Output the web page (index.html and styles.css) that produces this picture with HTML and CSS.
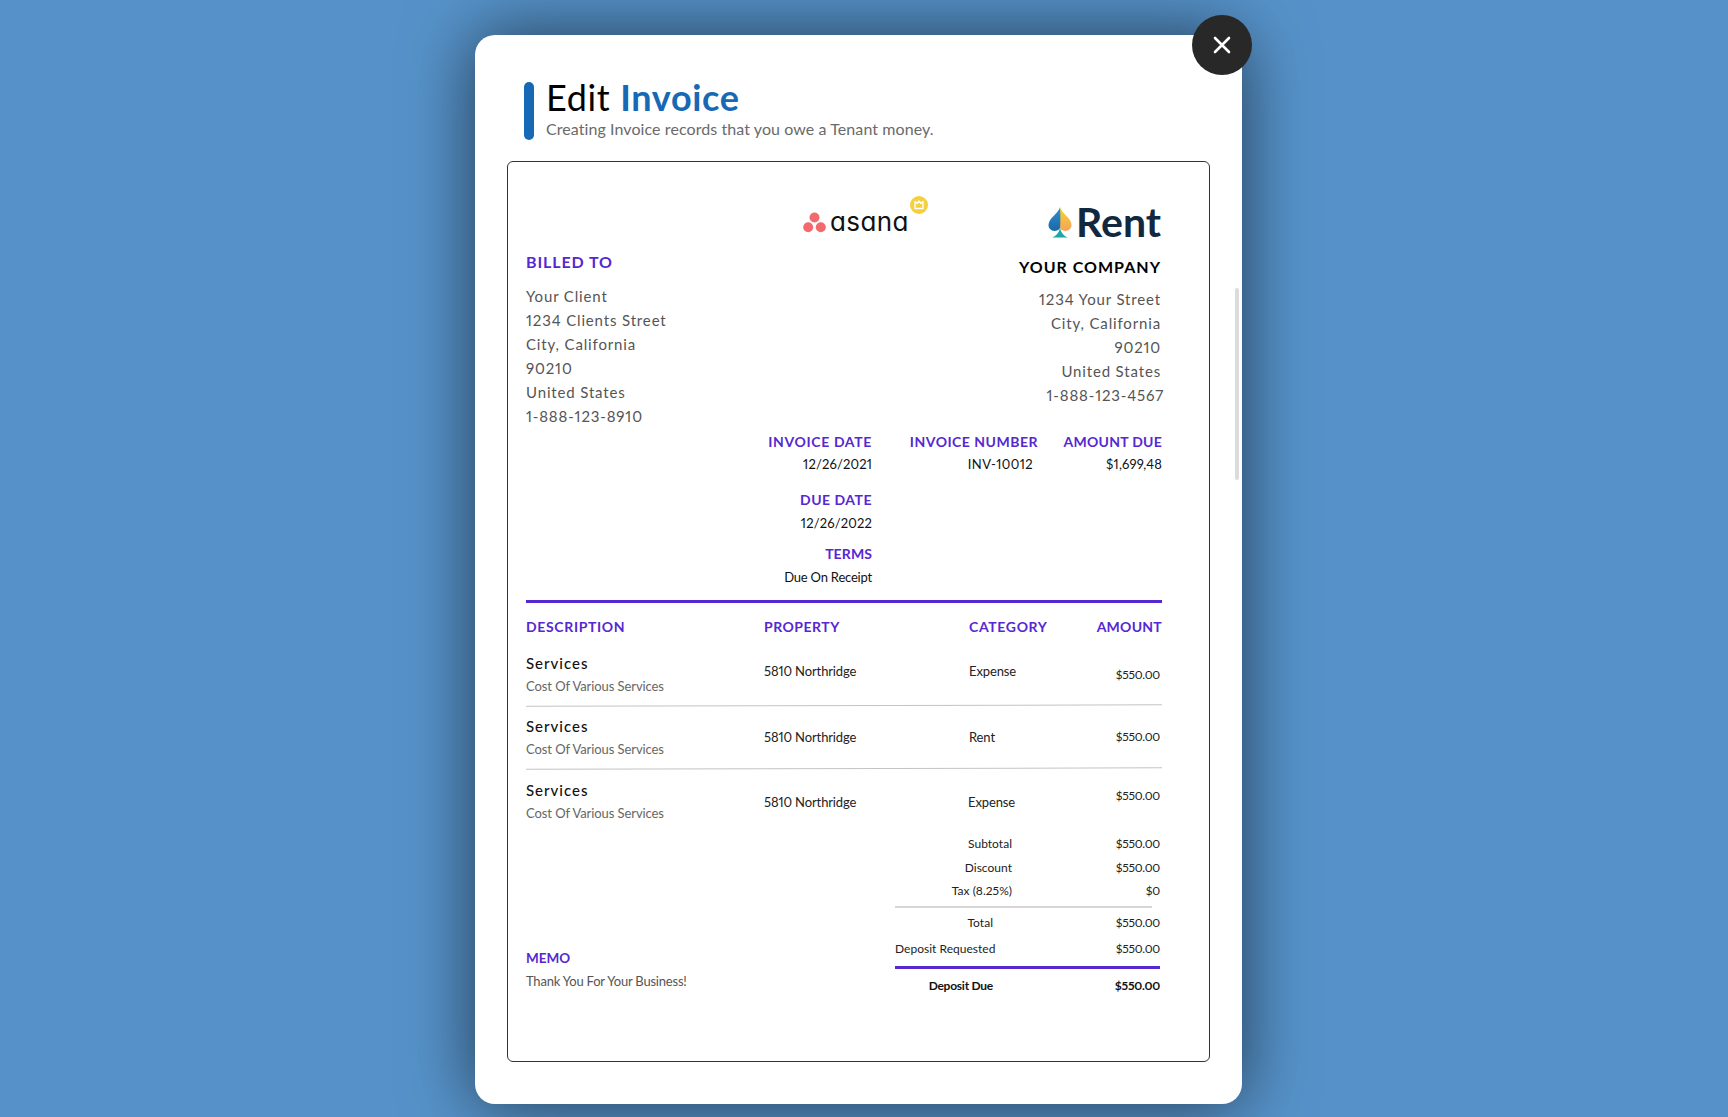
FILE: index.html
```html
<!DOCTYPE html>
<html lang="en">
<head>
<meta charset="utf-8">
<title>Edit Invoice</title>
<link rel="stylesheet" href="styles.css">
</head>
<body>
<div class="modal">
  <button class="close" aria-label="Close">
    <svg width="18" height="18" viewBox="0 0 18 18"><path d="M2 2 16 16M16 2 2 16" stroke="#fff" stroke-width="2.6" stroke-linecap="round" fill="none"/></svg>
  </button>
  <div class="scrollbar"></div>
  <header class="head">
    <span class="head-bar"></span>
    <div>
      <h1 class="title">Edit <b>Invoice</b></h1>
      <p class="subtitle">Creating Invoice records that you owe a Tenant money.</p>
    </div>
  </header>
  <section class="card">
    <div class="logos">
      <div class="asana">
        <svg class="asana-dots" width="23" height="21" viewBox="0 0 23 21"><circle cx="11.500" cy="5.500" r="5" fill="#f4696d"/><circle cx="5.200" cy="15.200" r="5" fill="#f4696d"/><circle cx="17.800" cy="15.200" r="5" fill="#f4696d"/></svg>
        <span class="asana-word">asana</span>
        <svg class="asana-badge" width="18" height="18" viewBox="0 0 18 18"><circle cx="9" cy="9" r="9" fill="#f6cf3c"/><path d="M5 5.500 7 7.500 9 5 11 7.500 13 5.500V12.500H5Z" fill="none" stroke="#fff" stroke-width="1.400" stroke-linejoin="round"/></svg>
      </div>
      <div class="rent">
        <svg width="26" height="31" viewBox="0 0 26 31"><defs><linearGradient id="sp" x1="0" y1="0" x2="0" y2="1"><stop offset="0" stop-color="#f7d32f"/><stop offset="1" stop-color="#f4a55a"/></linearGradient><linearGradient id="sb" x1="0" y1="0" x2="0" y2="1"><stop offset="0" stop-color="#2f8fd0"/><stop offset="1" stop-color="#1a69a8"/></linearGradient></defs><path d="M13 0C14 6 24.500 11 24.500 18C24.500 22.500 20 25 16 23.500C14.500 23 13.500 22 13 21Z" fill="url(#sp)"/><path d="M13 0C12 6 1.500 11 1.500 18C1.500 22.500 6 25 10 23.500C11.500 23 12.500 22 13 21C13.500 17 13.500 8 13 0Z" fill="url(#sb)"/><path d="M13 19C13 24 10 29 5 30.500H21C16 29 13 24 13 19Z" fill="#1fa7a8"/></svg>
        <span class="rent-word">Rent</span>
      </div>
    </div>
    <div class="parties">
      <div class="billed">
        <h2 class="billed-title">BILLED TO</h2>
        <p class="addr-line">Your Client</p>
        <p class="addr-line">1234 Clients Street</p>
        <p class="addr-line">City, California</p>
        <p class="addr-line">90210</p>
        <p class="addr-line">United States</p>
        <p class="addr-line">1-888-123-8910</p>
      </div>
      <div class="company">
        <h2 class="company-title">YOUR COMPANY</h2>
        <p class="addr-line">1234 Your Street</p>
        <p class="addr-line">City, California</p>
        <p class="addr-line">90210</p>
        <p class="addr-line">United States</p>
        <p class="addr-line phone">1-888-123-4567</p>
      </div>
    </div>
    <div class="meta">
      <div class="meta-col">
        <div class="label label-wide">INVOICE DATE</div>
        <div class="value value-first">12/26/2021</div>
        <div class="label due-label">DUE DATE</div>
        <div class="value">12/26/2022</div>
        <div class="label terms-label">TERMS</div>
        <div class="value value-terms">Due On Receipt</div>
      </div>
      <div class="meta-col">
        <div class="label">INVOICE NUMBER</div>
        <div class="value value-first inv-no">INV-10012</div>
      </div>
      <div class="meta-col">
        <div class="label label-tight">AMOUNT DUE</div>
        <div class="value value-first">$1,699,48</div>
      </div>
    </div>
    <div class="rule"></div>
    <div class="grid grid-head">
      <div class="label label-wide">DESCRIPTION</div>
      <div class="label">PROPERTY</div>
      <div class="label label-wide">CATEGORY</div>
      <div class="label label-tight amount-head">AMOUNT</div>
    </div>
    <div class="grid item item-a">
      <div><div class="item-title">Services</div><div class="item-sub">Cost Of Various Services</div></div>
      <div class="cell cell-prop">5810 Northridge</div>
      <div class="cell cell-cat">Expense</div>
      <div class="cell cell-amt">$550.00</div>
    </div>
    <div class="divider"></div>
    <div class="grid item item-b">
      <div><div class="item-title">Services</div><div class="item-sub">Cost Of Various Services</div></div>
      <div class="cell cell-prop">5810 Northridge</div>
      <div class="cell cell-cat">Rent</div>
      <div class="cell cell-amt">$550.00</div>
    </div>
    <div class="divider"></div>
    <div class="grid item item-c">
      <div><div class="item-title">Services</div><div class="item-sub">Cost Of Various Services</div></div>
      <div class="cell cell-prop">5810 Northridge</div>
      <div class="cell cell-cat">Expense</div>
      <div class="cell cell-amt">$550.00</div>
    </div>
    <div class="bottom">
      <div class="memo">
        <div class="label memo-label">MEMO</div>
        <div class="memo-text">Thank You For Your Business!</div>
      </div>
      <div class="totals">
        <div class="t-row t-sub"><span>Subtotal</span><span>$550.00</span></div>
        <div class="t-row t-disc"><span>Discount</span><span>$550.00</span></div>
        <div class="t-row t-tax"><span>Tax (8.25%)</span><span>$0</span></div>
        <div class="t-line"></div>
        <div class="t-row t-total"><span>Total</span><span>$550.00</span></div>
        <div class="t-row t-req"><span>Deposit Requested</span><span>$550.00</span></div>
        <div class="t-line-strong"></div>
        <div class="t-row t-due"><span>Deposit Due</span><span>$550.00</span></div>
      </div>
    </div>
  </section>
</div>
</body>
</html>
```
FILE: styles.css
```css
* { box-sizing: border-box; }
html, body { margin: 0; height: 100%; }
body {
  background: #5692c9;
  font-family: "Lato", "Liberation Sans", sans-serif;
  font-variant-numeric: proportional-nums;
  overflow: hidden;
  color: #000;
}
p, h1, h2 { margin: 0; font-weight: inherit; }
.modal {
  position: relative;
  width: 767px;
  height: 1069px;
  margin: 35px 0 0 475px;
  padding: 47px 31px 0 32px;
  background: #fff;
  border-radius: 20px;
  box-shadow: 0 0 70px rgba(0, 0, 0, .6);
}
.close {
  position: absolute;
  top: -20px;
  right: -10px;
  width: 60px;
  height: 60px;
  border: 0;
  border-radius: 50%;
  background: #282828;
  display: flex;
  align-items: center;
  justify-content: center;
  padding: 0;
}
.scrollbar {
  position: absolute;
  left: 760px;
  top: 253px;
  width: 4px;
  height: 192px;
  border-radius: 2px;
  background: #dcdcdc;
}
.head { display: flex; gap: 12px; margin-left: 17px; height: 79px; }
.head-bar { width: 10px; height: 58px; background: #1769b5; border-radius: 5px; }
.title { font-size: 36px; line-height: 36px; font-weight: 400; margin-top: -3px; letter-spacing: .65px; }
.title b { color: #1769b5; font-weight: 700; }
.subtitle { font-size: 16px; line-height: 20px; margin-top: 4px; color: #6a6a6a; letter-spacing: .08px; }
.card {
  width: 703px;
  height: 901px;
  border: 1px solid #333;
  border-radius: 6px;
  padding: 0 47px 0 18px;
}
.logos { height: 90px; display: flex; justify-content: space-between; align-items: flex-start; padding-left: 277px; }
.asana { position: relative; display: flex; align-items: center; gap: 4px; margin-top: 45px; height: 30px; }
.asana-word { font-family: "Inter", "Lato", sans-serif; font-feature-settings: "cv11"; font-size: 26px; line-height: 30px; letter-spacing: .4px; color: #111; }
.asana-badge { position: absolute; left: 107px; top: -11px; }
.rent { display: flex; align-items: center; gap: 3px; margin-top: 42px; padding-right: 1px; height: 36px; }
.rent-word { font-size: 41px; line-height: 36px; font-weight: 700; color: #12283f; }
.parties { display: flex; justify-content: space-between; height: 180px; }
.billed-title { font-size: 16px; line-height: 20px; font-weight: 700; color: #5528d2; letter-spacing: .9px; margin-bottom: 12px; }
.addr-line { font-size: 15px; line-height: 24px; letter-spacing: .85px; color: #555; }
.company { padding: 5px 1px 0 0; text-align: right; }
.company-title { font-size: 16px; line-height: 20px; font-weight: 700; color: #000; letter-spacing: 1px; margin-bottom: 10px; }
.phone { margin-right: -3px; }
.meta { display: grid; grid-template-columns: 346px 166px 124px; text-align: right; margin-top: 1px; }
.label { font-size: 14px; line-height: 18px; font-weight: 700; color: #5528d2; letter-spacing: .5px; }
.label-wide { letter-spacing: .65px; }
.label-tight { letter-spacing: .25px; }
.value { font-size: 13px; line-height: 18px; margin-top: 5px; color: #111; letter-spacing: .15px; }
.value-first { margin-top: 4px; }
.value-terms { letter-spacing: -.2px; }
.inv-no { padding-right: 5px; letter-spacing: .4px; }
.due-label { margin-top: 18px; }
.terms-label { margin-top: 13px; letter-spacing: .1px; }
.rule { height: 3px; background: #5528d2; margin-top: 14px; }
.grid { display: grid; grid-template-columns: 238px 205px 1fr 100px; }
.grid-head { margin-top: 15px; }
.amount-head { text-align: right; }
.item { align-items: start; }
.item-a { padding-top: 18px; height: 69px; }
.item-b { padding-top: 11px; height: 62px; }
.item-c { padding-top: 12px; height: 51px; }
.item-title { font-size: 15px; line-height: 18px; color: #111; letter-spacing: 1px; font-weight: 500; }
.item-sub { font-size: 13px; line-height: 16px; margin-top: 6px; color: #666; letter-spacing: -.08px; }
.cell { font-size: 13px; line-height: 16px; color: #222; letter-spacing: -.12px; }
.cell-amt { text-align: right; padding-right: 2px; font-size: 12px; letter-spacing: -.25px; }
.item-a .cell-prop, .item-a .cell-cat { margin-top: 9px; }
.item-a .cell-amt { margin-top: 13px; }
.item-b .cell-prop, .item-b .cell-cat { margin-top: 12px; }
.item-b .cell-amt { margin-top: 12px; }
.item-c .cell-prop, .item-c .cell-cat { margin-top: 13px; }
.item-c .cell-amt { margin-top: 7px; }
.item-c .cell-cat { margin-left: -1px; }
.divider { height: 1px; background: #c4c4c4; transform: rotate(-.12deg); }
.bottom { display: flex; justify-content: space-between; }
.memo { margin-top: 129px; }
.memo-label { letter-spacing: 0; font-size: 13.500px; }
.memo-text { font-size: 13px; line-height: 16px; margin-top: 6px; color: #555; letter-spacing: -.2px; }
.totals { width: 267px; padding-top: 16px; }
.t-row { display: flex; justify-content: space-between; font-size: 12px; line-height: 16px; color: #222; padding-right: 2px; letter-spacing: .02px; }
.t-row span:first-child { width: 117px; text-align: right; }
.t-row span:last-child { letter-spacing: -.25px; }
.t-disc { margin-top: 8px; }
.t-tax { margin-top: 7px; }
.t-line { height: 2px; width: 257px; background: #d6d6d6; margin: 7px 0; }
.t-total span:first-child { width: 98px; }
.t-req { margin-top: 10px; }
.t-req span:first-child { width: auto; text-align: left; }
.t-line-strong { height: 3px; width: 265px; background: #5528d2; margin-top: 9px; }
.t-due { margin-top: 9px; font-weight: 700; color: #111; }
.t-due span:first-child { width: 98px; letter-spacing: -.25px; }
```
